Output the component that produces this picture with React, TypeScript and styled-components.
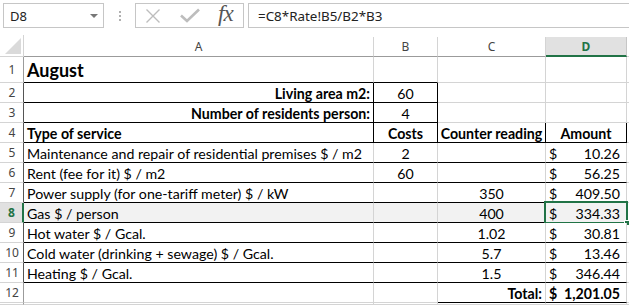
import React from "react";
import styled, { createGlobalStyle } from "styled-components";

const Global = createGlobalStyle`
  html, body { margin: 0; padding: 0; background: #ffffff; overflow: hidden; }
  * { box-sizing: border-box; }
`;

const GRID = "#d4d4d4";
const BLACK = "#000000";
const GREEN = "#217346";

const Page = styled.div`
  width: 629px;
  height: 305px;
  background: #ffffff;
  display: flex;
  flex-direction: column;
  font-family: "Lato", "Liberation Sans", sans-serif;
`;

const FormulaBar = styled.div`
  height: 36px;
  display: flex;
  align-items: flex-start;
  padding-top: 3px;
  padding-left: 3px;
`;

const NameBox = styled.div`
  width: 101px;
  height: 25px;
  border: 1px solid #c6c6c6;
  display: flex;
  align-items: center;
  justify-content: space-between;
  padding: 0 5px 0 6px;
  font-family: "Noto Sans", "Liberation Sans", sans-serif;
  font-size: 13px;
  color: #222;
`;

const DropArrow = styled.span`
  width: 0;
  height: 0;
  border-left: 4px solid transparent;
  border-right: 4px solid transparent;
  border-top: 4px solid #777;
  margin-top: 1px;
`;

const Dots = styled.div`
  width: 31px;
  height: 25px;
  display: flex;
  flex-direction: column;
  align-items: center;
  justify-content: center;
  gap: 2px;
  & > span {
    width: 2px;
    height: 2px;
    background: #b0b0b0;
  }
`;

const IconBox = styled.div`
  width: 109px;
  height: 25px;
  border: 1px solid #c6c6c6;
  display: flex;
  align-items: center;
  padding-left: 9px;
  gap: 19px;
`;

const Fx = styled.span`
  font-family: "Liberation Serif", "DejaVu Serif", serif;
  font-style: italic;
  font-size: 23px;
  color: #555;
  letter-spacing: -1px;
  margin-left: -1px;
  margin-top: -3px;
`;

const FormulaInput = styled.div`
  flex: 1;
  height: 25px;
  margin-left: 4px;
  border: 1px solid #c6c6c6;
  border-right: none;
  display: flex;
  align-items: center;
  padding-left: 9px;
  font-family: "Noto Sans", "Liberation Sans", sans-serif;
  font-size: 13.4px;
  color: #222;
`;

const Sheet = styled.div`
  display: grid;
  grid-template-columns: 24px 350px 64px 108px 81px 2px;
  grid-template-rows: 22px 26px repeat(11, 20px) 2px;
`;

const Corner = styled.div`
  border-right: 1px solid ${GRID};
  border-bottom: 1px solid ${GRID};
  display: flex;
  align-items: flex-end;
  justify-content: flex-end;
  padding: 0 2px 2px 0;
`;

const ColHead = styled.div<{ $active?: boolean }>`
  display: flex;
  align-items: center;
  justify-content: center;
  font-family: "Noto Sans", "Liberation Sans", sans-serif;
  font-size: 12px;
  color: ${(p) => (p.$active ? GREEN : "#444")};
  font-weight: ${(p) => (p.$active ? 700 : 400)};
  background: ${(p) => (p.$active ? "#e1e1e1" : "#ffffff")};
  border-right: 1px solid ${(p) => (p.$active ? "#c6c6c6" : GRID)};
  border-bottom: ${(p) => (p.$active ? `2px solid ${GREEN}` : `1px solid #9b9b9b`)};
  margin-top: 2px;
  padding-top: ${(p) => (p.$active ? "1px" : "0")};
`;

const RowHead = styled.div<{ $active?: boolean; $dark?: boolean }>`
  display: flex;
  align-items: center;
  justify-content: center;
  font-family: "Noto Sans", "Liberation Sans", sans-serif;
  font-size: 12px;
  color: ${(p) => (p.$active ? GREEN : "#444")};
  font-weight: ${(p) => (p.$active ? 700 : 400)};
  background: ${(p) => (p.$active ? "#e1e1e1" : "#ffffff")};
  border-right: ${(p) =>
    p.$active ? `2px solid ${GREEN}` : `1px solid ${p.$dark ? "#555" : "#9b9b9b"}`};
  border-bottom: 1px solid ${GRID};
  padding-left: 1px;
`;

type Align = "left" | "center" | "right";

const Cell = styled.div<{
  $r?: boolean;
  $b?: boolean;
  $align?: Align;
  $bold?: boolean;
  $shade?: boolean;
  $big?: boolean;
}>`
  position: relative;
  display: flex;
  align-items: center;
  justify-content: ${(p) =>
    p.$align === "center" ? "center" : p.$align === "right" ? "flex-end" : "flex-start"};
  padding: 0 3px;
  padding-top: 1px;
  font-size: ${(p) => (p.$big ? "18px" : "14.2px")};
  font-weight: ${(p) => (p.$bold || p.$big ? 700 : 400)};
  color: #000;
  white-space: nowrap;
  overflow: visible;
  background: ${(p) => (p.$shade ? "#f2f2f2" : "#ffffff")};
  border-right: 1px solid ${(p) => (p.$r ? BLACK : GRID)};
  border-bottom: 1px solid ${(p) => (p.$b ? BLACK : GRID)};
`;

const Acct = styled(Cell)`
  justify-content: space-between;
  padding: 1px 6px 0 3px;
`;

const Selection = styled.div`
  position: absolute;
  left: -2px;
  top: -2px;
  right: -2px;
  bottom: -2px;
  border: 2px solid ${GREEN};
  pointer-events: none;
`;

const Handle = styled.div`
  position: absolute;
  right: -4px;
  bottom: -4px;
  width: 6px;
  height: 6px;
  background: ${GREEN};
  border: 1px solid #ffffff;
`;

const Edge = styled.div`
  border-bottom: 1px solid ${GRID};
`;

type Row = {
  n: number;
  a: string;
  aAlign?: Align;
  aBold?: boolean;
  big?: boolean;
  bVal?: string;
  bBold?: boolean;
  cVal?: string;
  cAlign?: Align;
  cBold?: boolean;
  d?: string;
  dBold?: boolean;
  rA?: boolean;
  rB?: boolean;
  rC?: boolean;
  rD?: boolean;
  bA?: boolean;
  bB?: boolean;
  bC?: boolean;
  bD?: boolean;
  shade?: boolean;
  active?: boolean;
};

const rows: Row[] = [
  { n: 1, a: "August", big: true, bA: true, bB: true },
  { n: 2, a: "Living area m2:", aAlign: "right", aBold: true, bVal: "60", rA: true, rB: true, bA: true, bB: true },
  { n: 3, a: "Number of residents person:", aAlign: "right", aBold: true, bVal: "4", rA: true, rB: true, bA: true, bB: true },
  { n: 4, a: "Type of service", aBold: true, bVal: "Costs", bBold: true, cVal: "Counter reading", cBold: true, d: "Amount", dBold: true, rA: true, rB: true, rC: true, rD: true, bA: true, bB: true, bC: true, bD: true },
  { n: 5, a: "Maintenance and repair of residential premises $ / m2", bVal: "2", d: "10.26", bA: true, bB: true, bC: true, bD: true },
  { n: 6, a: "Rent (fee for it) $ / m2", bVal: "60", d: "56.25", bA: true, bB: true, bC: true, bD: true },
  { n: 7, a: "Power supply (for one-tariff meter) $ / kW", cVal: "350", d: "409.50", bA: true, bB: true, bC: true, bD: true },
  { n: 8, a: "Gas $ / person", cVal: "400", d: "334.33", bA: true, bB: true, bC: true, bD: true, shade: true, active: true },
  { n: 9, a: "Hot water $ / Gcal.", cVal: "1.02", d: "30.81", bA: true, bB: true, bC: true, bD: true },
  { n: 10, a: "Cold water (drinking + sewage) $ / Gcal.", cVal: "5.7", d: "13.46", bA: true, bB: true, bC: true, bD: true },
  { n: 11, a: "Heating $ / Gcal.", cVal: "1.5", d: "346.44", bA: true, bB: true, bC: true, bD: true },
  { n: 12, a: "", cVal: "Total:", cAlign: "right", cBold: true, d: "1,201.05", dBold: true, bC: true, bD: true },
];

const XIcon = () => (
  <svg width="16" height="16" viewBox="0 0 16 16">
    <path d="M1.5 1.5 L14.5 14.5 M14.5 1.5 L1.5 14.5" stroke="#bdbdbd" strokeWidth="1.4" fill="none" />
  </svg>
);

const CheckIcon = () => (
  <svg width="20" height="15" viewBox="0 0 20 15">
    <path d="M1 7.5 L7 13 L19 1.5" stroke="#bdbdbd" strokeWidth="2.6" fill="none" />
  </svg>
);

const CornerTri = () => (
  <svg width="16" height="16" viewBox="0 0 16 16">
    <path d="M16 0 L16 16 L0 16 Z" fill="#dadada" />
  </svg>
);

export default function App() {
  return (
    <Page>
      <Global />
      <FormulaBar>
        <NameBox>
          D8
          <DropArrow />
        </NameBox>
        <Dots>
          <span />
          <span />
          <span />
        </Dots>
        <IconBox>
          <XIcon />
          <CheckIcon />
          <Fx>fx</Fx>
        </IconBox>
        <FormulaInput>=C8*Rate!B5/B2*B3</FormulaInput>
      </FormulaBar>
      <Sheet>
        <Corner>
          <CornerTri />
        </Corner>
        <ColHead>A</ColHead>
        <ColHead>B</ColHead>
        <ColHead>C</ColHead>
        <ColHead $active>D</ColHead>
        <Edge />
        {rows.map((r) => (
          <React.Fragment key={r.n}>
            <RowHead $active={r.active} $dark={r.n >= 2 && r.n <= 11}>
              {r.n}
            </RowHead>
            <Cell
              $align={r.aAlign}
              $bold={r.aBold}
              $big={r.big}
              $r={r.rA}
              $b={r.bA}
              $shade={r.shade}
            >
              {r.a}
            </Cell>
            <Cell $align="center" $bold={r.bBold} $r={r.rB} $b={r.bB} $shade={r.shade}>
              {r.bVal}
            </Cell>
            <Cell
              $align={r.cAlign ?? "center"}
              $bold={r.cBold}
              $r={r.rC}
              $b={r.bC}
              $shade={r.shade}
            >
              {r.cVal}
            </Cell>
            {r.d && r.n >= 5 ? (
              <Acct $bold={r.dBold} $r={r.rD} $b={r.bD} $shade={r.shade}>
                <span>$</span>
                <span>{r.d}</span>
                {r.active && (
                  <Selection>
                    <Handle />
                  </Selection>
                )}
              </Acct>
            ) : (
              <Cell $align="center" $bold={r.dBold} $r={r.rD} $b={r.bD} $shade={r.shade}>
                {r.d}
              </Cell>
            )}
            <Edge />
          </React.Fragment>
        ))}
        <RowHead />
        <Cell />
        <Cell />
        <Cell />
        <Cell />
        <Edge />
      </Sheet>
    </Page>
  );
}
